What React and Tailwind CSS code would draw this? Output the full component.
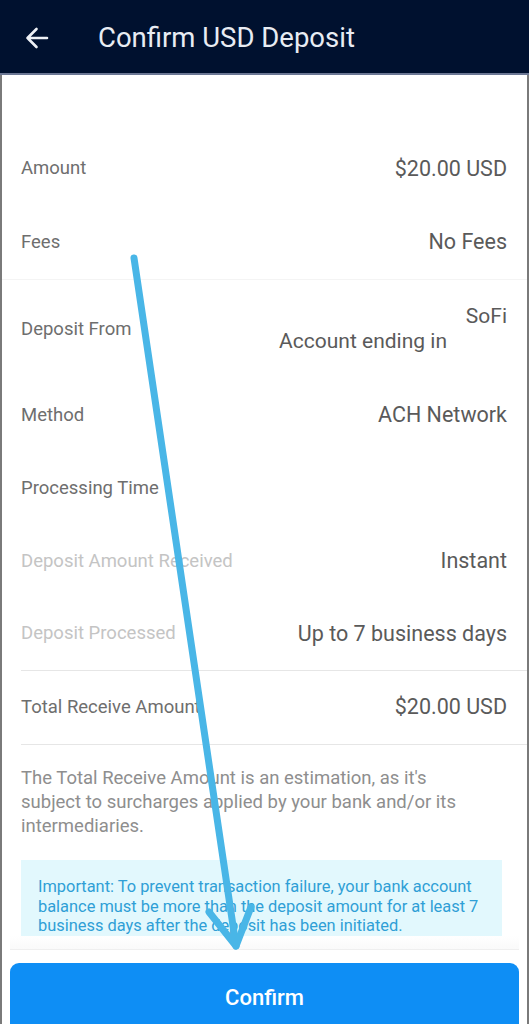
import React from "react";

const rows = [
  { label: "Amount", value: "$20.00 USD", h: "h-[74px]" },
  { label: "Fees", value: "No Fees", h: "h-[74px]", line: true },
  { label: "Deposit From", h: "h-[99px]", sofi: true },
  { label: "Method", value: "ACH Network", h: "h-[73px]" },
  { label: "Processing Time", value: "", h: "h-[73px]" },
  { label: "Deposit Amount Received", value: "Instant", h: "h-[73px]", faded: true },
  { label: "Deposit Processed", value: "Up to 7 business days", h: "h-[72px]", faded: true },
];

const Row = ({ row }) => (
  <div className={`flex items-center justify-between pl-[19px] pr-[20px] ${row.h} ${row.line ? "border-b border-[#f4f4f4]" : ""}`}>
    <span className={`text-[18.5px] ${row.faded ? "text-[#c4c4c4]" : "text-[#6e6e6e]"}`}>{row.label}</span>
    {row.sofi ? (
      <div className="flex flex-col items-end text-[21px] leading-[25px] text-[#5a5a5a]">
        <span className="-mt-[2px]">SoFi</span>
        <span className="mr-[60px]">Account ending in</span>
      </div>
    ) : (
      <span className="text-[21.5px] text-[#5a5a5a]">{row.value}</span>
    )}
  </div>
);

const App = () => {
  return (
    <div className="relative w-[529px] h-[1024px] overflow-hidden flex flex-col bg-white font-['Roboto',sans-serif]">
      {/* Header */}
      <header className="h-[75px] shrink-0 flex items-center bg-[#00112f] border-b-2 border-[#6b7794]">
        <svg width="24" height="24" viewBox="0 0 24 24" className="ml-[25px] mt-[2px]" fill="none" stroke="#eef1f6" strokeWidth="2.6" strokeLinecap="round" strokeLinejoin="round">
          <path d="M22 12H2.5M11.5 3L2.5 12L11.5 21" />
        </svg>
        <h1 className="ml-[49px] mt-[2px] text-[27.5px] font-normal text-[#e8ecf3]">Confirm USD Deposit</h1>
      </header>

      {/* Body */}
      <main className="flex-1 overflow-hidden border-x-2 border-[#7a7a7a] pt-[57px]">
        {rows.map((row) => (
          <Row key={row.label} row={row} />
        ))}
        <div className="ml-[19px] border-t border-[#e6e6e6] flex items-center justify-between h-[74px] pr-[20px]">
          <span className="text-[18.5px] text-[#6e6e6e]">Total Receive Amount</span>
          <span className="text-[21.5px] text-[#5a5a5a]">$20.00 USD</span>
        </div>
        <div className="ml-[19px] border-t border-[#e6e6e6]" />
        <p className="ml-[19px] mr-[40px] mt-[21px] text-[18.5px] leading-[24px] text-[#8e8e8e]">
          The Total Receive Amount is an estimation, as it's subject to surcharges applied by your bank and/or its intermediaries.
        </p>
        <div className="ml-[19px] mr-[25px] mt-[22px] bg-[#e2f8fd] pl-[17px] pr-[8px] pt-[17px] pb-[16px] text-[16.4px] leading-[19.5px] text-[#2f9fd6]">
          Important: To prevent transaction failure, your bank account balance must be more than the deposit amount for at least 7 business days after the deposit has been initiated.
        </div>
      </main>

      {/* Footer */}
      <footer className="h-[88px] shrink-0 border-x-2 border-[#7a7a7a] bg-white px-[8px]">
        <div className="h-[14px] bg-gradient-to-b from-white to-[#fafafa] border-b border-[#efefef]" />
        <div className="pt-[13px]">
          <button className="w-full h-[70px] rounded-[9px] bg-[#0e8ef5] text-white text-[22px] font-medium pb-[2px]">
            Confirm
          </button>
        </div>
      </footer>

      {/* Hand-drawn annotation arrow */}
      <svg className="absolute inset-0 pointer-events-none" width="529" height="1024" viewBox="0 0 529 1024" fill="none" stroke="#49b6e7" strokeWidth="7" strokeLinecap="round" strokeLinejoin="round">
        <path d="M134 258 L236 946" />
        <path d="M209 912 L236 946 L251 907" />
      </svg>
    </div>
  );
};

export default App;
